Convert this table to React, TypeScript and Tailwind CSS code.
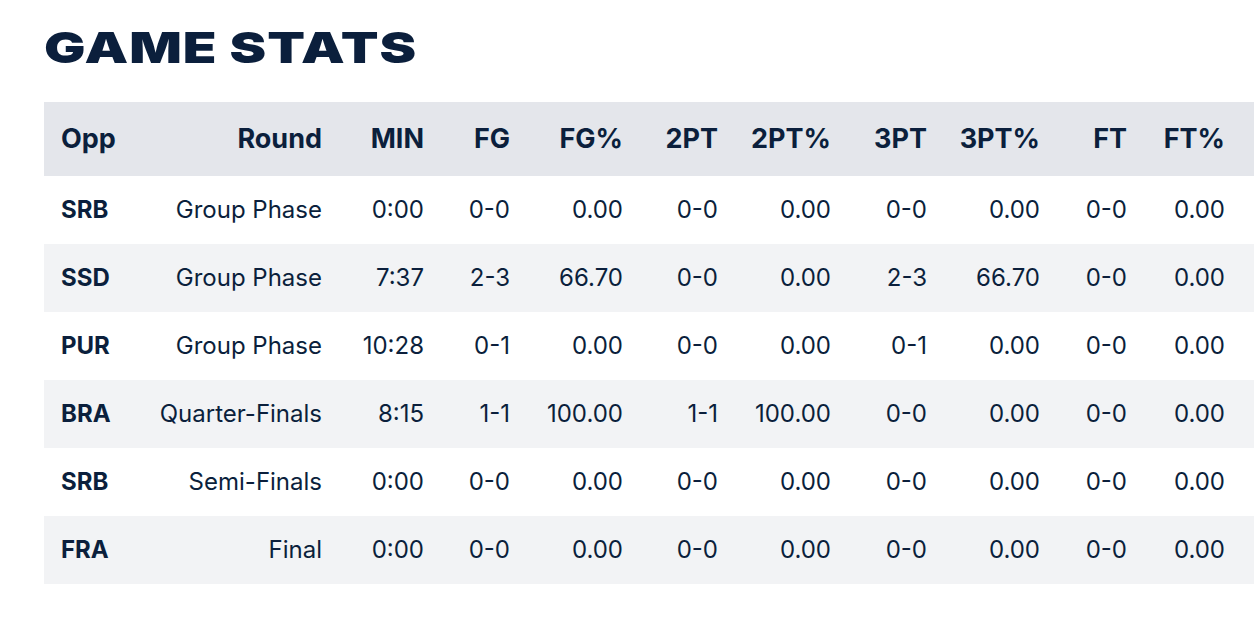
import React from "react";

const headers = ["Opp", "Round", "MIN", "FG", "FG%", "2PT", "2PT%", "3PT", "3PT%", "FT", "FT%"];
const rows = [
  ["SRB", "Group Phase", "0:00", "0-0", "0.00", "0-0", "0.00", "0-0", "0.00", "0-0", "0.00"],
  ["SSD", "Group Phase", "7:37", "2-3", "66.70", "0-0", "0.00", "2-3", "66.70", "0-0", "0.00"],
  ["PUR", "Group Phase", "10:28", "0-1", "0.00", "0-0", "0.00", "0-1", "0.00", "0-0", "0.00"],
  ["BRA", "Quarter-Finals", "8:15", "1-1", "100.00", "1-1", "100.00", "0-0", "0.00", "0-0", "0.00"],
  ["SRB", "Semi-Finals", "0:00", "0-0", "0.00", "0-0", "0.00", "0-0", "0.00", "0-0", "0.00"],
  ["FRA", "Final", "0:00", "0-0", "0.00", "0-0", "0.00", "0-0", "0.00", "0-0", "0.00"],
];

const grid = "grid grid-cols-[80px_198px_102px_86px_113px_95px_113px_96px_113px_87px_98px_40px]";

export default function App() {
  return (
    <div className="w-[1254px] h-[636px] overflow-hidden bg-white text-[#0b1f3c]" style={{ fontFamily: "Inter, 'Noto Sans', sans-serif" }}>
      <div className="pl-[44px] pt-[24px] h-[70px]">
        <h1 className="text-[43px] leading-[46px] font-black tracking-[0.8px] origin-left scale-x-[1.28] w-max">GAME STATS</h1>
      </div>
      <div className="ml-[44px] mt-[32px] w-[1240px]">
        <div className={`${grid} h-[74px] items-center bg-[#e4e6eb] text-[27px] font-bold`}>
          {headers.map((h, i) => (
            <div key={h} className={i === 0 ? "pl-[17px]" : "text-right"}>{h}</div>
          ))}
          <div />
        </div>
        {rows.map((r, ri) => (
          <div key={ri} className={`${grid} h-[68px] items-center text-[24px] ${ri % 2 === 1 ? "bg-[#f2f3f5]" : "bg-white"}`}>
            {r.map((c, i) => (
              <div key={i} className={i === 0 ? "pl-[17px] font-bold" : "text-right"}>{c}</div>
            ))}
            <div />
          </div>
        ))}
      </div>
    </div>
  );
}
